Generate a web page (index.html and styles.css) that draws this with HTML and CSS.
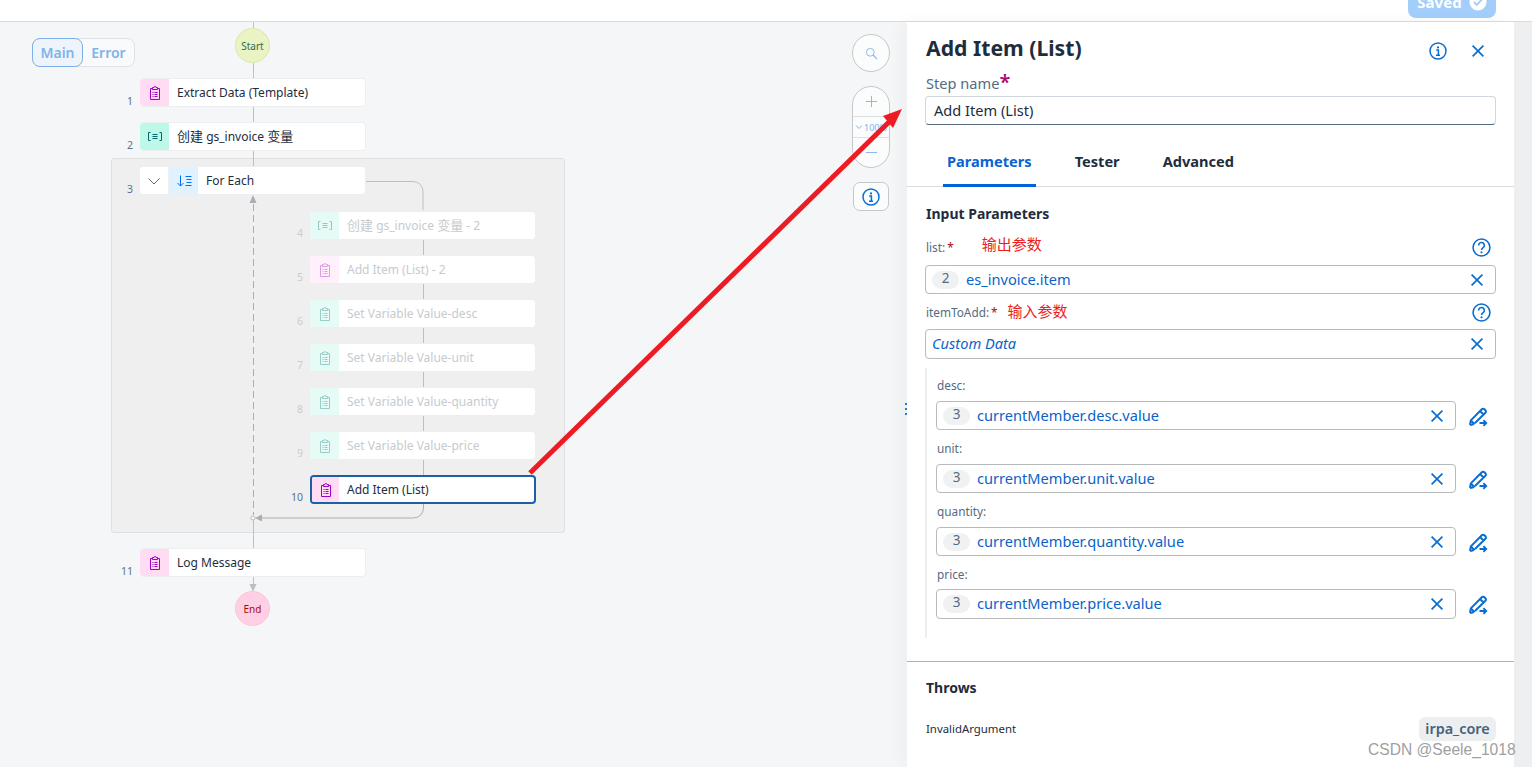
FILE: index.html
```html
<!DOCTYPE html>
<html lang="en">
<head>
<meta charset="utf-8">
<title>Add Item (List)</title>
<link rel="stylesheet" href="styles.css">
</head>
<body>
<svg class="defs" width="0" height="0" aria-hidden="true">
  <symbol id="clip" viewBox="0 0 16 16">
    <path d="M5.500 3.500H3.500V14.500H12.500V3.500H10.500M5.500 4.500V2.500H7a1 1 0 0 1 2 0H10.500V4.500zM5.500 7.500h1M7.500 7.500h3M5.500 9.500h1M7.500 9.500h3M5.500 11.500h1M7.500 11.500h3" fill="none" stroke="currentColor" stroke-width="1"/>
  </symbol>
  <symbol id="var" viewBox="0 0 16 16">
    <path d="M3.500 3.500H1.500V11.500H3.500M12.500 3.500h2V11.500h-2M5.500 5.500h5M5.500 7.500h5M5.500 9.500h5" fill="none" stroke="currentColor" stroke-width="1"/>
  </symbol>
  <symbol id="x" viewBox="0 0 16 16">
    <path d="M2.600 2.600l10.800 10.800M13.400 2.600L2.600 13.400" fill="none" stroke="currentColor" stroke-width="1.700"/>
  </symbol>
  <symbol id="help" viewBox="0 0 18 18">
    <circle cx="9" cy="9" r="8" fill="none" stroke="currentColor" stroke-width="1.500"/>
    <path d="M6.300 7a2.700 2.700 0 1 1 4.200 2.200c-.9.6-1.400 1-1.400 2.100" fill="none" stroke="currentColor" stroke-width="1.500"/>
    <circle cx="9" cy="13.600" r="1" fill="currentColor"/>
  </symbol>
  <symbol id="info" viewBox="0 0 18 18">
    <circle cx="9" cy="9" r="8" fill="none" stroke="currentColor" stroke-width="1.500"/>
    <circle cx="9" cy="5.400" r="1.100" fill="currentColor"/>
    <path d="M7.200 8h2.200v5M7 13.200h4" fill="none" stroke="currentColor" stroke-width="1.500"/>
  </symbol>
  <symbol id="pen" viewBox="0 0 22 22">
    <path d="M3 20l.8-4.600L14.800 4.200a1.800 1.800 0 0 1 2.600 0l1 1a1.800 1.800 0 0 1 0 2.600L8 18M3 20l3.500-.8M3.800 15.400l3.800 3.800M13 6l3.800 3.800" fill="none" stroke="currentColor" stroke-width="2"/>
    <path d="M12.500 18h6.500M16.400 15.200l2.800 2.800-2.800 2.800" fill="none" stroke="currentColor" stroke-width="1.900"/>
  </symbol>
</svg>

<header class="topbar">
  <div class="saved">
    <span>Saved</span>
    <svg class="saved-icon" viewBox="0 0 20 20"><circle cx="10" cy="10" r="9.500" fill="#fff"/><path d="M5.500 10l3.200 3.200 6-6.400" fill="none" stroke="#a3cdfa" stroke-width="2"/></svg>
  </div>
</header>

<div class="workspace">
  <main class="canvas">
    <div class="toggle">
      <span class="toggle-on">Main</span>
      <span class="toggle-off">Error</span>
    </div>

    <div class="group"></div>

    <svg class="wires" width="907" height="745" viewBox="0 22 907 745">
      <g fill="none" stroke="#bcc0c5" stroke-width="1">
        <path d="M253.500 22V28M253.500 63V166"/>
        <path d="M253.500 518V590"/>
        <path d="M366 181.500H413a10 10 0 0 1 10 10V210M423.500 239V255M423.500 283V299M423.500 327V343M423.500 371V387M423.500 415V431M423.500 459V475"/>
        <path d="M423.500 504V508a10 10 0 0 1-10 10H262" stroke="#a9aeb4"/>
        <path d="M253.500 204V515" stroke="#a9aeb4" stroke-dasharray="7 4"/>
      </g>
      <path d="M253 195l3.500 8h-7z" fill="#a9aeb4"/>
      <path d="M255 518l7-3.500v7z" fill="#a9aeb4"/>
      <circle cx="253" cy="518" r="2" fill="#fff" stroke="#b5b9be"/>
      <path d="M253 592l-3.500-8h7z" fill="#bcc0c5"/>
    </svg>

    <div class="bubble bubble-start">Start</div>
    <div class="bubble bubble-end">End</div>

    <div class="row row-a">
      <span class="num">1</span>
      <div class="node"><span class="tile tile-pink"><svg class="ico"><use href="#clip"/></svg></span><span class="name">Extract Data (Template)</span></div>
    </div>
    <div class="row row-b">
      <span class="num">2</span>
      <div class="node"><span class="tile tile-teal"><svg class="ico"><use href="#var"/></svg></span><span class="name name-cjk"><span class="cjk">创建</span> gs_invoice <span class="cjk">变量</span></span></div>
    </div>
    <div class="row row-c">
      <span class="num">3</span>
      <div class="node">
        <span class="tile tile-chev"><svg class="ico" viewBox="0 0 16 16"><path d="M2.500 5.500L8 11l5.500-5.500" fill="none" stroke="#5b6b7b" stroke-width="1"/></svg></span>
        <span class="tile tile-blue"><svg class="ico" viewBox="0 0 16 16"><path d="M4.500 2.500v10.500M1.500 10l3 3 3-3M9.500 3.500h6M10.500 6.500h5M10.500 9.500h5M9.500 12.500h6" fill="none" stroke="currentColor" stroke-width="1"/></svg></span>
        <span class="name">For Each</span>
      </div>
    </div>

    <div class="inner">
      <div class="row row-inner"><span class="num num-faded">4</span>
        <div class="node node-faded"><span class="tile tile-teal"><svg class="ico"><use href="#var"/></svg></span><span class="name name-cjk"><span class="cjk">创建</span> gs_invoice <span class="cjk">变量</span> - 2</span></div></div>
      <div class="row row-inner"><span class="num num-faded">5</span>
        <div class="node node-faded"><span class="tile tile-pink"><svg class="ico"><use href="#clip"/></svg></span><span class="name">Add Item (List) - 2</span></div></div>
      <div class="row row-inner"><span class="num num-faded">6</span>
        <div class="node node-faded"><span class="tile tile-mint"><svg class="ico"><use href="#clip"/></svg></span><span class="name">Set Variable Value-desc</span></div></div>
      <div class="row row-inner"><span class="num num-faded">7</span>
        <div class="node node-faded"><span class="tile tile-mint"><svg class="ico"><use href="#clip"/></svg></span><span class="name">Set Variable Value-unit</span></div></div>
      <div class="row row-inner"><span class="num num-faded">8</span>
        <div class="node node-faded"><span class="tile tile-mint"><svg class="ico"><use href="#clip"/></svg></span><span class="name">Set Variable Value-quantity</span></div></div>
      <div class="row row-inner"><span class="num num-faded">9</span>
        <div class="node node-faded"><span class="tile tile-mint"><svg class="ico"><use href="#clip"/></svg></span><span class="name">Set Variable Value-price</span></div></div>
      <div class="row row-inner"><span class="num">10</span>
        <div class="node node-selected"><span class="tile tile-pink"><svg class="ico"><use href="#clip"/></svg></span><span class="name">Add Item (List)</span></div></div>
    </div>

    <div class="row row-d">
      <span class="num">11</span>
      <div class="node"><span class="tile tile-pink"><svg class="ico"><use href="#clip"/></svg></span><span class="name">Log Message</span></div>
    </div>

    <div class="tools">
      <button class="tool tool-round" type="button"><svg class="tool-ico" viewBox="0 0 14 14"><circle cx="5.700" cy="5.700" r="4.200" fill="none" stroke="currentColor"/><path d="M8.800 8.800l4 4" stroke="currentColor" stroke-width="1.300"/></svg></button>
      <div class="zoom-pill">
        <span class="zoom-btn"><svg class="tool-ico" viewBox="0 0 14 14"><path d="M7 1v12M1 7h12" stroke="currentColor"/></svg></span>
        <span class="zoom-val"><svg class="zoom-chev" viewBox="0 0 8 8"><path d="M1 2.500l3 3 3-3" fill="none" stroke="currentColor"/></svg>100%</span>
        <span class="zoom-btn"><svg class="tool-ico" viewBox="0 0 14 14"><path d="M1 7h12" stroke="currentColor"/></svg></span>
      </div>
      <button class="tool tool-info" type="button"><svg class="tool-info-ico"><use href="#info"/></svg></button>
    </div>
  </main>

  <aside class="panel">
    <span class="dots"></span>
    <div class="panel-head">
      <h1 class="title">Add Item (List)</h1>
      <div class="head-actions">
        <svg class="act-info"><use href="#info"/></svg>
        <svg class="x x-head"><use href="#x"/></svg>
      </div>
    </div>
    <div class="step">
      <label class="step-label">Step name<span class="star">*</span></label>
      <div class="step-input">Add Item (List)</div>
    </div>

    <nav class="tabs">
      <span class="tab tab-on">Parameters</span>
      <span class="tab">Tester</span>
      <span class="tab">Advanced</span>
    </nav>

    <section class="params">
      <h2 class="h2">Input Parameters</h2>
      <div class="lbl lbl-first">
        <span class="lbl-text">list:<i class="req">*</i></span><span class="note note-list">输出参数</span>
        <svg class="help"><use href="#help"/></svg>
      </div>
      <div class="field field-a"><span class="chip">2</span><span class="val">es_invoice.item</span><svg class="x"><use href="#x"/></svg></div>
      <div class="lbl lbl-second">
        <span class="lbl-text">itemToAdd:<i class="req">*</i></span><span class="note note-item">输入参数</span>
        <svg class="help"><use href="#help"/></svg>
      </div>
      <div class="field field-b"><span class="val val-italic">Custom Data</span><svg class="x"><use href="#x"/></svg></div>

      <div class="nested">
        <div class="sub">
          <div class="sub-label">desc:</div>
          <div class="sub-row"><div class="field field-sub"><span class="chip">3</span><span class="val">currentMember.desc.value</span><svg class="x"><use href="#x"/></svg></div><svg class="pen"><use href="#pen"/></svg></div>
        </div>
        <div class="sub">
          <div class="sub-label">unit:</div>
          <div class="sub-row"><div class="field field-sub"><span class="chip">3</span><span class="val">currentMember.unit.value</span><svg class="x"><use href="#x"/></svg></div><svg class="pen"><use href="#pen"/></svg></div>
        </div>
        <div class="sub">
          <div class="sub-label">quantity:</div>
          <div class="sub-row"><div class="field field-sub"><span class="chip">3</span><span class="val">currentMember.quantity.value</span><svg class="x"><use href="#x"/></svg></div><svg class="pen"><use href="#pen"/></svg></div>
        </div>
        <div class="sub sub-last">
          <div class="sub-label">price:</div>
          <div class="sub-row"><div class="field field-sub field-tall"><span class="chip">3</span><span class="val">currentMember.price.value</span><svg class="x"><use href="#x"/></svg></div><svg class="pen"><use href="#pen"/></svg></div>
        </div>
      </div>
    </section>

    <section class="throws">
      <h2 class="h2">Throws</h2>
      <div class="throw-row"><span class="throw-name">InvalidArgument</span><span class="tag">irpa_core</span></div>
    </section>
  </aside>

  <div class="gutter"></div>
</div>

<svg class="annot" width="1532" height="767" viewBox="0 0 1532 767">
  <path d="M530 473L889 122" stroke="#ed1c24" stroke-width="5" fill="none"/>
  <path d="M902 109L883 116L893 128z" fill="#ed1c24"/>
</svg>
<div class="watermark">CSDN @Seele_1018</div>
</body>
</html>
```
FILE: styles.css
```css
* { box-sizing: border-box; }
html, body { margin: 0; height: 767px; overflow: hidden; }
body {
  position: relative;
  display: flex;
  flex-direction: column;
  font-family: "Noto Sans", "Noto Sans CJK SC", sans-serif;
  color: #1d2d3e;
  background: #fff;
}
.defs { position: absolute; }

.topbar {
  height: 22px;
  flex: none;
  border-bottom: 1px solid #d9dbdd;
  background: #fff;
  display: flex;
  justify-content: flex-end;
  padding-right: 36px;
  overflow: hidden;
}
.saved {
  width: 88px;
  height: 32px;
  margin-top: -14px;
  background: #a3cdfa;
  border-radius: 8px;
  color: #fff;
  font-size: 15px;
  font-weight: 700;
  display: flex;
  align-items: center;
  justify-content: center;
  gap: 7px;
}
.saved-icon { width: 18px; height: 18px; }

.workspace { flex: 1; display: flex; min-height: 0; }

/* canvas */
.canvas { position: relative; width: 907px; flex: none; background: #f5f6f7; }
.toggle {
  position: absolute; left: 32px; top: 16px;
  width: 103px; height: 29px;
  display: flex;
  background: #f8fafb;
  border: 1px solid #dfe3e8;
  border-radius: 8px;
  font-size: 14px; font-weight: 600;
  color: #82b2ea;
  margin: 0;
}
.toggle-on {
  width: 51px; height: 29px; margin: -1px 0 0 -1px;
  background: #eef4fb;
  border: 1px solid #7db0ea;
  border-radius: 8px;
  display: flex; align-items: center; justify-content: center;
}
.toggle-off { flex: 1; display: flex; align-items: center; justify-content: center; }

.group {
  position: absolute; left: 111px; top: 136px;
  width: 454px; height: 375px;
  background: #efefef;
  border: 1px solid #dfdfdf;
  border-radius: 3px;
}
.wires { position: absolute; left: 0; top: 0; }

.bubble {
  position: absolute; left: 235px;
  width: 35px; height: 35px; border-radius: 50%;
  font-size: 10px;
  display: flex; align-items: center; justify-content: center;
}
.bubble-start { top: 6px; background: #e9f3c4; border: 1px solid #dde8a8; color: #2f6b4f; }
.bubble-end { top: 569px; background: #ffd0e4; border: 1px solid #fcc4dc; color: #aa0808; }

.row { display: flex; align-items: stretch; }
.row-a, .row-b, .row-c, .row-d { position: absolute; left: 110px; }
.row-a { top: 56px; }
.row-b { top: 100px; }
.row-c { top: 144px; }
.row-d { top: 526px; }
.inner {
  position: absolute; left: 280px; top: 189px;
  display: flex; flex-direction: column; gap: 15px;
}
.num {
  width: 23px;
  margin-right: 7px;
  text-align: right;
  align-self: flex-end;
  font-size: 10.500px;
  line-height: 14px;
  margin-bottom: -1px;
  color: #5b738b;
}
.inner .num { margin-bottom: 0; }
.num-faded { color: #c9cdd1; }
.node {
  width: 226px; height: 29px;
  background: #fff;
  border: 1px solid #eceef0;
  border-left: 0;
  border-radius: 4px;
  display: flex; align-items: center;
  font-size: 12px;
  overflow: hidden;
}
.node-faded { color: #c6cbd0; }
.node-faded .ico { opacity: .35; }
.node-selected { border: 2px solid #1b5fa5; }
.node-selected .tile { width: 27px; }
.tile {
  width: 29px; height: 100%; flex: none;
  display: flex; align-items: center; justify-content: center;
}
.ico { width: 16px; height: 16px; }
.tile-pink { background: #ffdcf3; color: #a100c2; }
.tile-teal { background: #bdf8e8; color: #04676b; }
.tile-mint { background: #e6fbf6; color: #0b7a78; }
.tile-blue { background: #e0f1ff; color: #0070f2; }
.tile-chev { background: #fff; border-right: 1px solid #eef0f2; }
.node-faded .tile-teal { background: #e6fbf6; }
.node-faded .tile-pink { background: #fff0fb; }
.name { padding-left: 8px; white-space: nowrap; }
.name-cjk { margin-top: -2px; }
.cjk { font-size: 13px; }

.tools {
  position: absolute; left: 852px; top: 12px;
  width: 38px;
  display: flex; flex-direction: column; align-items: center;
  gap: 14px;
  color: #7fb4ee;
}
.tool { padding: 0; background: #fbfcfc; border: 1px solid #c4c8cc; display: flex; align-items: center; justify-content: center; color: inherit; }
.tool-round { width: 38px; height: 38px; border-radius: 50%; }
.tool-ico { width: 13px; height: 13px; }
.zoom-pill {
  width: 38px; height: 82px;
  background: #fbfcfc;
  border: 1px solid #c4c8cc;
  border-radius: 19px;
  display: flex; flex-direction: column;
  overflow: hidden;
}
.zoom-btn { flex: 1; display: flex; align-items: center; justify-content: center; }
.zoom-val {
  height: 22px; flex: none;
  border-top: 1px solid #dcdfe2; border-bottom: 1px solid #dcdfe2;
  display: flex; align-items: center;
  font-size: 9px; white-space: nowrap;
  padding-left: 2px;
}
.zoom-chev { width: 8px; height: 8px; flex: none; margin-right: 1px; }
.tool-info { width: 36px; height: 29px; border-radius: 7px; color: #0a6ed1; }
.tool-info-ico { width: 18px; height: 18px; }

/* panel */
.panel {
  position: relative;
  width: 607px; flex: none;
  background: #fff;
  box-shadow: -6px 0 14px rgba(40, 50, 60, .04);
}
.dots {
  position: absolute; left: -2px; top: 381px;
  width: 2px; height: 12px;
  background: repeating-linear-gradient(#1f7ad8 0 2px, transparent 2px 5px);
}
.panel-head {
  height: 38px; padding: 12px 28px 0 19px;
  display: flex; justify-content: space-between;
}
.title { margin: 0; font-size: 21.200px; line-height: 28px; font-weight: 700; letter-spacing: 0; }
.head-actions { display: flex; align-items: center; gap: 23px; height: 34px; color: #0a6ed1; }
.act-info { width: 18px; height: 18px; }
.x { width: 16px; height: 16px; color: #0a6ed1; flex: none; }
.step { padding: 12px 18px 0 18px; }
.step-label { display: block; font-size: 14.600px; line-height: 23px; margin-bottom: 1px; color: #556b82; padding-left: 1px; }
.star { color: #aa0a78; font-size: 20px; line-height: 14px; font-weight: 600; }
.step-input {
  height: 29px;
  border: 1px solid #d1d7df;
  border-bottom-color: #556b82;
  border-radius: 4px;
  font-size: 14.600px; line-height: 27px;
  padding-left: 8px;
}
.tabs {
  margin-top: 13px; height: 49px;
  padding-left: 36px;
  border-bottom: 1px solid #d9dbdd;
  display: flex; gap: 35px;
}
.tab {
  height: 49px; padding: 0 4px;
  font-size: 14.600px; font-weight: 700; line-height: 47px;
  border-bottom: 3px solid transparent;
}
.tab-on { color: #0a63d1; border-bottom-color: #0064d9; }

.params { padding: 17px 18px 0; }
.h2 { margin: 0; font-size: 14px; line-height: 20px; font-weight: 700; padding-left: 1px; }
.lbl { position: relative; height: 20px; display: flex; align-items: center; font-size: 11.800px; color: #556b82; padding-left: 1px; }
.lbl-first { margin-top: 13px; }
.lbl-second { margin-top: 8px; }
.req { color: #aa0808; font-style: normal; margin-left: 2px; }
.note { color: #ed1c24; font-size: 15px; line-height: 20px; position: relative; top: -3px; }
.lbl-second .note { top: -1px; }
.note-list { margin-left: 28px; }
.note-item { margin-left: 10px; }
.help { margin-left: auto; margin-right: 5px; width: 19px; height: 19px; color: #0a6ed1; }

.field {
  display: flex; align-items: center;
  height: 29px;
  border: 1px solid #b8babc;
  border-radius: 4px;
  padding: 0 10px 0 6px;
  background: #fff;
}
.field-a { margin-top: 8px; }
.field-b { margin-top: 7px; height: 30px; }
.field-sub { width: 520px; }
.field-tall { height: 30px; }
.chip {
  width: 27px; height: 18px; border-radius: 9px;
  background: #eff1f2; color: #556b82;
  font-size: 13.500px; line-height: 15px; text-align: center;
  margin-right: 7px; flex: none;
}
.val { flex: 1; font-size: 14.600px; line-height: 20px; color: #0a63c9; white-space: nowrap; position: relative; top: -1px; }
.val-italic { font-style: italic; }
.nested {
  margin-top: 9px; height: 270px;
  border-left: 2px solid #eeeeee;
  padding: 7px 0 0 9px;
}
.sub { height: 63px; }
.sub-last { height: 62px; }
.sub-label { height: 20px; line-height: 20px; padding-left: 1px; font-size: 11.800px; color: #556b82; }
.sub-row { margin-top: 6px; display: flex; align-items: center; }
.sub-last .sub-row { margin-top: 5px; }
.pen { width: 22px; height: 22px; margin-left: 11px; color: #0a6ed1; flex: none; }

.throws { margin-top: 23px; border-top: 1px solid #a9b4be; padding: 16px 18px 0; }
.throw-row { margin-top: 19px; height: 24px; display: flex; align-items: center; justify-content: space-between; padding-left: 1px; }
.throw-name { font-size: 11.400px; position: relative; top: -1px; }
.tag {
  width: 77px; height: 24px; border-radius: 6px;
  background: #eceef0; color: #44617f;
  font-size: 14.400px; font-weight: 600; line-height: 23px; text-align: center;
}
.gutter { flex: 1; background: #eeeff1; }

.annot { position: absolute; left: 0; top: 0; pointer-events: none; }
.watermark {
  position: absolute; left: 1368px; top: 740px;
  font-family: "Liberation Sans", sans-serif;
  font-size: 15.600px; line-height: 20px; color: #a0a0a0;
  white-space: nowrap;
}
```
